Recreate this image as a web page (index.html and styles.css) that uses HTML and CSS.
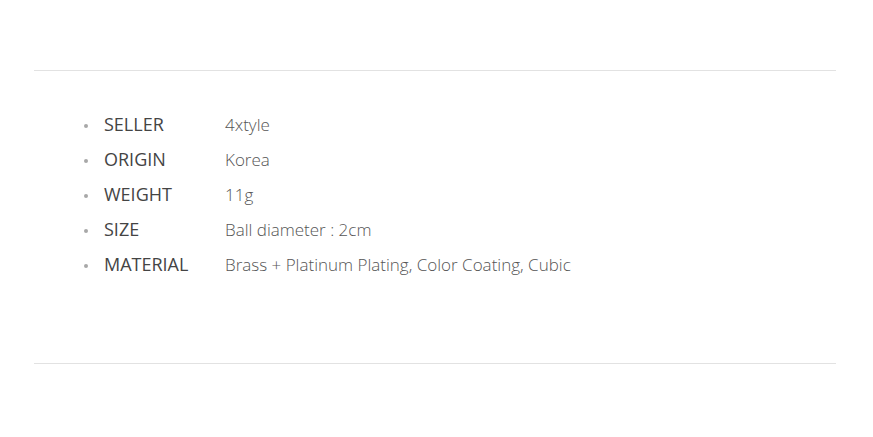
FILE: index.html
```html
<!DOCTYPE html>
<html>
<head>
<meta charset="utf-8">
<link rel="stylesheet" href="styles.css">
</head>
<body>
<div class="wrap">
  <section class="info">
    <ul class="spec">
      <li class="row"><span class="label">SELLER</span><span class="value">4xtyle</span></li>
      <li class="row"><span class="label">ORIGIN</span><span class="value">Korea</span></li>
      <li class="row"><span class="label">WEIGHT</span><span class="value">11g</span></li>
      <li class="row"><span class="label">SIZE</span><span class="value">Ball diameter : 2cm</span></li>
      <li class="row"><span class="label">MATERIAL</span><span class="value">Brass + Platinum Plating, Color Coating, Cubic</span></li>
    </ul>
  </section>
</div>
</body>
</html>
```
FILE: styles.css
```css
html, body {
  margin: 0;
  padding: 0;
  background: #fff;
}
body {
  font-family: "Open Sans", "Liberation Sans", sans-serif;
}
.wrap {
  padding: 70px 37px 0 34px;
}
.info {
  border-top: 1px solid #e2e2e2;
  border-bottom: 1px solid #e2e2e2;
  height: 294px;
  box-sizing: border-box;
  padding-top: 36px;
}
.spec {
  list-style: none;
  margin: 0;
  padding: 0 0 0 50px;
}
.row {
  display: flex;
  align-items: center;
  height: 35px;
}
.row::before {
  content: "";
  width: 4px;
  height: 4px;
  border-radius: 50%;
  background: #a8a8a8;
  margin: 2px 16px 0 0;
  flex: none;
}
.label {
  width: 121px;
  font-size: 18px;
  color: #444;
  font-weight: 400;
  margin-bottom: 2px;
}
.value {
  font-size: 17px;
  color: #555;
  font-weight: 300;
}
```
